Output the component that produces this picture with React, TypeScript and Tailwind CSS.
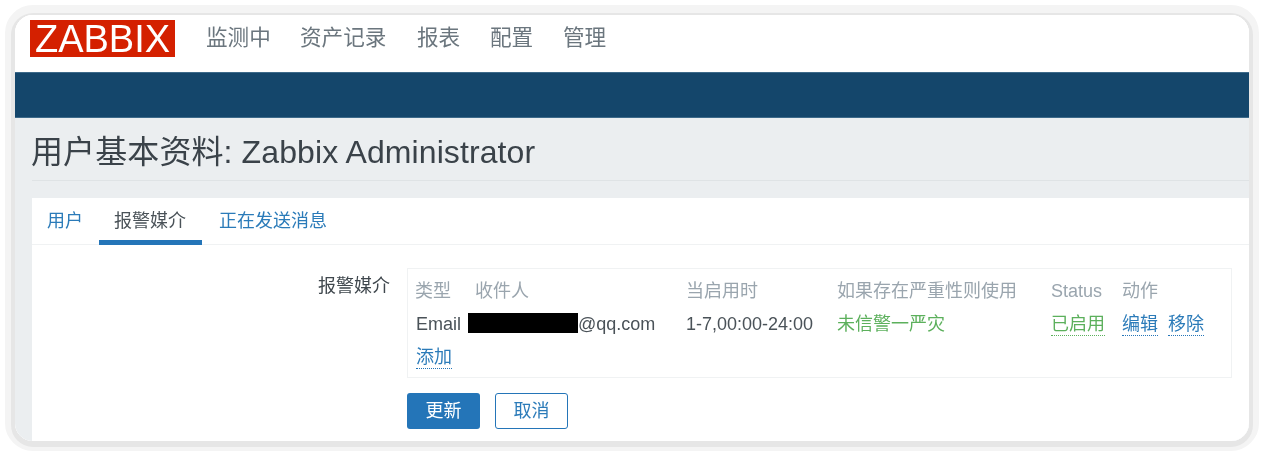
const fontStack = {
  fontFamily: '"Liberation Sans", "Noto Sans CJK SC", sans-serif',
};

const navItems = [
  { label: "监测中", width: "w-[65px]" },
  { label: "资产记录", width: "w-[88px]" },
  { label: "报表", width: "w-[44px]" },
  { label: "配置", width: "w-[44px]" },
  { label: "管理", width: "w-[44px]" },
];

const DottedLink = ({
  children,
  className = "",
}: {
  children: React.ReactNode;
  className?: string;
}) => (
  <span
    className={`inline-block h-[25px] border-b border-dotted text-[18px] leading-[26px] ${className}`}
  >
    {children}
  </span>
);

const App = () => {
  return (
    <div className="h-[456px] w-[1264px] overflow-hidden bg-white p-[5px]" style={fontStack}>
      <div className="h-[446px] w-[1254px] rounded-[28px] border-[10px] border-[#f4f4f4] bg-white">
        <div className="h-[426px] w-[1234px] rounded-[18px] bg-white shadow-[0_2px_0_4px_#e6e6e6]">
          <div className="flex h-[426px] w-[1234px] flex-col overflow-hidden rounded-[18px] bg-white [filter:blur(0.7px)]">
            {/* top nav */}
            <header className="flex h-[57px] shrink-0 items-start bg-white pl-[15px] pt-[5px]">
              <div className="flex h-[37px] w-[145px] items-center justify-center bg-[#d42000] text-[38px] leading-none text-white">
                ZABBIX
              </div>
              <nav className="ml-[31px] flex gap-[29px] pt-[3px] text-[21.6px] leading-[30px] text-[#6b767e]">
                {navItems.map((item) => (
                  <span key={item.label} className={`${item.width} whitespace-nowrap`}>
                    {item.label}
                  </span>
                ))}
              </nav>
            </header>
            <div className="h-[46px] shrink-0 border-y border-[#3d6a8a] bg-[#14466b]" />

            {/* page body */}
            <main className="flex flex-1 flex-col bg-[#ebeef0] pl-[17px]">
              <div className="h-[63px] shrink-0 border-b border-[#dfe3e5] pt-[14px]">
                <h1 className="-ml-px whitespace-nowrap text-[32px] leading-[40px] tracking-[0.1px] text-[#3a4249]">
                  用户基本资料: Zabbix Administrator
                </h1>
              </div>

              <section className="mt-[17px] flex flex-1 flex-col bg-white">
                <div className="flex h-[47px] shrink-0 items-start border-b border-[#f0f2f3] pl-[15px] text-[18px] leading-[47px]">
                  <span className="w-[52px] text-[#2b7bb9]">用户</span>
                  <span className="h-[47px] w-[103px] border-b-[5px] border-[#2475b8] pl-[15px] text-[#4a5258]">
                    报警媒介
                  </span>
                  <span className="ml-[17px] text-[#2b7bb9]">正在发送消息</span>
                </div>

                <div className="flex items-start pt-[23px]">
                  <div className="w-[375px] pt-[5px] pr-[17px] text-right text-[18px] leading-[26px] text-[#3f474d]">
                    报警媒介
                  </div>
                  <div>
                    <div className="h-[110px] w-[825px] border border-[#f0f2f3] pl-[7px] pt-[9px]">
                      <div className="flex h-[26px] text-[18px] leading-[26px] text-[#9aa5ae]">
                        <span className="w-[60px]">类型</span>
                        <span className="w-[211px]">收件人</span>
                        <span className="w-[151px]">当启用时</span>
                        <span className="w-[214px] whitespace-nowrap">如果存在严重性则使用</span>
                        <span className="w-[71px]">Status</span>
                        <span>动作</span>
                      </div>
                      <div className="mt-[7px] flex h-[26px] items-start text-[18px] leading-[26px] text-[#4a5258]">
                        <span className="w-[53px] pl-px">Email</span>
                        <span className="mt-[2px] h-[20px] w-[110px] bg-black" />
                        <span className="w-[108px]">@qq.com</span>
                        <span className="w-[151px]">1-7,00:00-24:00</span>
                        <span className="w-[214px] text-[#5cb05c]">未信警一严灾</span>
                        <span className="flex w-[71px] items-start">
                          <DottedLink className="h-[24px] border-[#5cb05c] text-[#5cb05c]">已启用</DottedLink>
                        </span>
                        <DottedLink className="border-[#2475b8] text-[#2b7bb9]">编辑</DottedLink>
                        <DottedLink className="ml-[10px] border-[#2475b8] text-[#2b7bb9]">移除</DottedLink>
                      </div>
                      <div className="mt-[7px] flex h-[26px] items-start pl-px">
                        <DottedLink className="border-[#2475b8] text-[#2b7bb9]">添加</DottedLink>
                      </div>
                    </div>
                    <div className="mt-[15px] flex gap-[15px] text-[18px]">
                      <button className="h-[36px] w-[73px] rounded-[3px] bg-[#2475b8] text-white">
                        更新
                      </button>
                      <button className="h-[36px] w-[73px] rounded-[3px] border border-[#2475b8] bg-white text-[#2b7bb9]">
                        取消
                      </button>
                    </div>
                  </div>
                </div>
              </section>
            </main>
          </div>
        </div>
      </div>
    </div>
  );
};

export default App;
